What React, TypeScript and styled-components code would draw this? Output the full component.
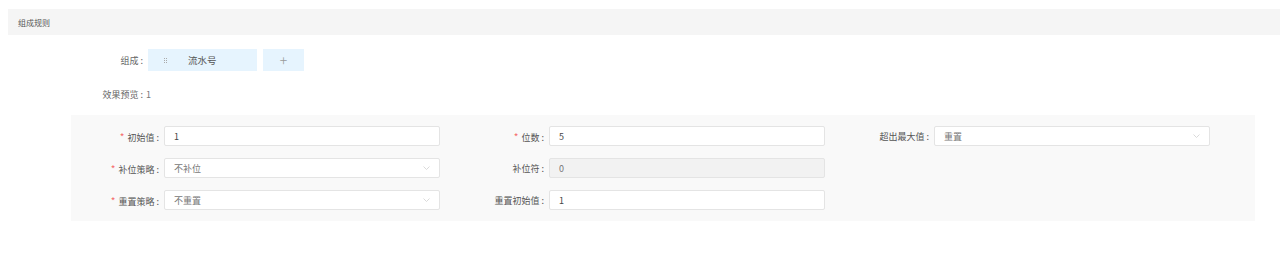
import styled, { createGlobalStyle } from 'styled-components'

const GlobalStyle = createGlobalStyle`
  body {
    margin: 0;
    background: #fff;
    font-family: "Noto Sans CJK SC", "Noto Sans", sans-serif;
    color: #555;
  }
`

const Page = styled.div`
  padding: 9px 0 0 8px;
`

const SectionHeader = styled.div`
  display: flex;
  align-items: center;
  height: 26px;
  padding-left: 10px;
  background: #f5f5f5;
  font-size: 8px;
  color: #555;
`

const InfoRow = styled.div<{ $top: number; $height: number }>`
  display: flex;
  align-items: center;
  height: ${({ $height }) => $height}px;
  margin-top: ${({ $top }) => $top}px;
  font-size: 9px;
`

const InfoLabel = styled.span`
  width: 135px;
  text-align: right;
  color: #666;
`

const Colon = styled.span`
  margin-left: 2px;
`

const Chip = styled.div<{ $width: number }>`
  display: flex;
  align-items: center;
  width: ${({ $width }) => $width}px;
  height: 22px;
  margin-left: 5px;
  background: #e6f4fe;
  color: #555;
  font-size: 9.5px;
`

const Handle = styled.span`
  display: grid;
  grid-template-columns: repeat(2, 1px);
  gap: 1px 1px;
  margin-left: 16px;
  margin-right: 21px;

  i {
    width: 1px;
    height: 1px;
    background: #aaa;
  }
`

const PlusButton = styled(Chip)`
  justify-content: center;
  margin-left: 6px;
  font-size: 14px;
  font-weight: 300;
  color: #999;
`

const PreviewValue = styled.span`
  margin-left: 3px;
  color: #777;
`

const Panel = styled.div`
  display: grid;
  grid-template-columns: repeat(3, 385px);
  grid-auto-rows: 20px;
  row-gap: 12px;
  width: 1184px;
  margin: 11px 0 0 63px;
  padding: 11px 0;
  background: #f9f9f9;
  box-sizing: border-box;
`

const Field = styled.div`
  display: grid;
  grid-template-columns: 93px 276px;
  align-items: center;
`

const Label = styled.label`
  padding-right: 5px;
  text-align: right;
  font-size: 9px;
  color: #555;
  white-space: nowrap;
`

const Star = styled.span`
  margin-right: 3px;
  color: #f56c6c;
  font-size: 10px;
`

const Box = styled.div<{ $disabled?: boolean; $muted?: boolean }>`
  display: flex;
  align-items: center;
  justify-content: space-between;
  height: 20px;
  padding: 0 9px;
  box-sizing: border-box;
  border: 1px solid #e4e4e4;
  border-radius: 2px;
  background: ${({ $disabled }) => ($disabled ? '#f2f2f2' : '#fff')};
  color: ${({ $muted }) => ($muted ? '#777' : '#444')};
  font-size: 9px;
`

const Chevron = () => (
  <svg width="7" height="4" viewBox="0 0 7 4" fill="none">
    <path d="M0.5 0.5 L3.5 3.5 L6.5 0.5" stroke="#d0d0d0" strokeWidth="0.8" />
  </svg>
)

type FieldDef = {
  label: string
  required?: boolean
  value: string
  select?: boolean
  disabled?: boolean
}

const fields: (FieldDef | null)[] = [
  { label: '初始值', required: true, value: '1' },
  { label: '位数', required: true, value: '5' },
  { label: '超出最大值', value: '重置', select: true },
  { label: '补位策略', required: true, value: '不补位', select: true },
  { label: '补位符', value: '0', disabled: true },
  null,
  { label: '重置策略', required: true, value: '不重置', select: true },
  { label: '重置初始值', value: '1' },
  null,
]

export default function App() {
  return (
    <Page>
      <GlobalStyle />
      <SectionHeader>组成规则</SectionHeader>
      <InfoRow $top={14} $height={22}>
        <InfoLabel>
          组成<Colon>:</Colon>
        </InfoLabel>
        <Chip $width={109}>
          <Handle>
            {Array.from({ length: 6 }, (_, i) => (
              <i key={i} />
            ))}
          </Handle>
          流水号
        </Chip>
        <PlusButton $width={41}>+</PlusButton>
      </InfoRow>
      <InfoRow $top={13} $height={20}>
        <InfoLabel>
          效果预览<Colon>:</Colon>
        </InfoLabel>
        <PreviewValue>1</PreviewValue>
      </InfoRow>
      <Panel>
        {fields.map((f, i) =>
          f ? (
            <Field key={i}>
              <Label>
                {f.required && <Star>*</Star>}
                {f.label}
                <Colon>:</Colon>
              </Label>
              <Box $disabled={f.disabled} $muted={f.select || f.disabled}>
                <span>{f.value}</span>
                {f.select && <Chevron />}
              </Box>
            </Field>
          ) : (
            <span key={i} />
          ),
        )}
      </Panel>
    </Page>
  )
}
